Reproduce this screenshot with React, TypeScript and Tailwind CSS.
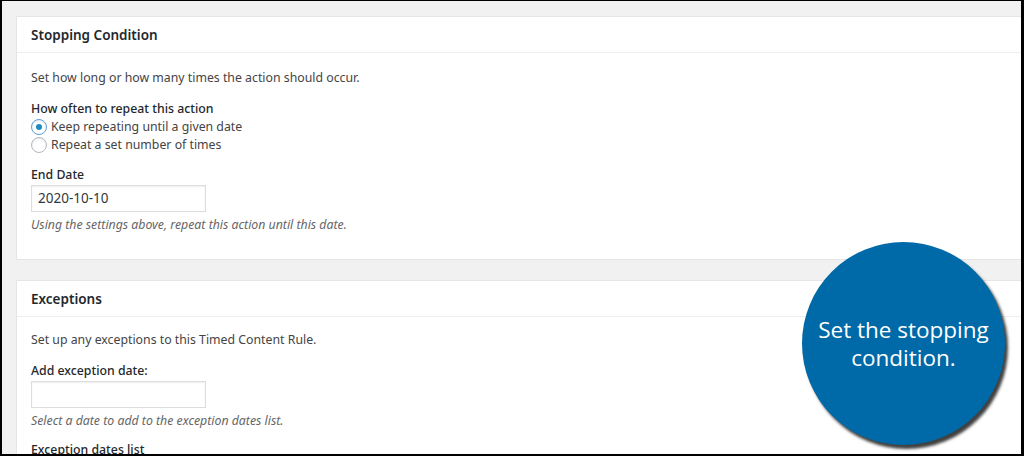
type RadioProps = {
  label: string
  checked?: boolean
}

function Radio({ label, checked }: RadioProps) {
  return (
    <label className="flex h-[18px] items-center gap-[4px]">
      <span
        className={[
          'flex h-[16px] w-[16px] items-center justify-center rounded-full border bg-white shadow-[inset_0_1px_2px_rgba(0,0,0,0.1)]',
          checked ? 'border-[#5b9dd9]' : 'border-[#b4b9be]',
        ].join(' ')}
      >
        {checked ? <span className="h-[6px] w-[6px] rounded-full bg-[#1e8cbe]" /> : null}
      </span>
      <span>{label}</span>
    </label>
  )
}

function TextInput({ value }: { value?: string }) {
  return (
    <div className="mt-[1px] flex h-[27px] w-[175px] items-center border border-[#dddddd] bg-white px-[6px] text-[13.5px] text-[#32373c] shadow-[inset_0_1px_2px_rgba(0,0,0,0.07)]">
      {value}
    </div>
  )
}

function Card({ title, children }: { title: string; children: React.ReactNode }) {
  return (
    <section className="border border-r-0 border-[#e5e5e5] bg-white">
      <h2 className="flex h-[36px] items-center border-b border-[#eeeeee] px-[14px] pt-[2px] text-[13.5px] font-semibold text-[#23282d]">
        {title}
      </h2>
      <div className="px-[14px] pb-[14px]">{children}</div>
    </section>
  )
}

export default function App() {
  return (
    <div className="h-[456px] w-[1024px] bg-black pb-[2px] pl-[2px] pr-[3px] pt-[1px]">
      <div
        className="relative h-full overflow-hidden bg-[#f1f1f1] pl-[14px] pt-[15px] text-[12.3px] text-[#444444]"
        style={{ fontFamily: '"Noto Sans", "Open Sans", sans-serif' }}
      >
        <Card title="Stopping Condition">
          <p className="mt-[16px] leading-[18px]">Set how long or how many times the action should occur.</p>
          <p className="mt-[13px] font-medium leading-[18px] text-[#23282d]">How often to repeat this action</p>
          <Radio label="Keep repeating until a given date" checked />
          <Radio label="Repeat a set number of times" />
          <p className="mt-[12px] font-medium leading-[18px] text-[#23282d]">End Date</p>
          <TextInput value="2020-10-10" />
          <p className="mt-[4px] italic leading-[18px] text-[#666666]">
            Using the settings above, repeat this action until this date.
          </p>
          <div className="h-[11px]" />
        </Card>

        <div className="h-[20px]" />

        <Card title="Exceptions">
          <p className="mt-[14px] leading-[18px]">Set up any exceptions to this Timed Content Rule.</p>
          <p className="mt-[13px] font-medium leading-[18px] text-[#23282d]">Add exception date:</p>
          <TextInput />
          <p className="mt-[4px] italic leading-[18px] text-[#666666]">
            Select a date to add to the exception dates list.
          </p>
          <p className="mt-[11px] font-medium leading-[18px] text-[#23282d]">Exception dates list</p>
        </Card>

        <div className="absolute left-[800px] top-[241px] flex h-[203px] w-[203px] items-center justify-center rounded-full bg-[#0069a7] shadow-[3px_4px_3px_rgba(0,0,0,0.75)]">
          <p
            className="text-center text-[22.5px] leading-[28px] text-white"
            style={{ fontFamily: '"Open Sans", "Noto Sans", sans-serif' }}
          >
            Set the stopping
            <br />
            condition.
          </p>
        </div>
      </div>
    </div>
  )
}
